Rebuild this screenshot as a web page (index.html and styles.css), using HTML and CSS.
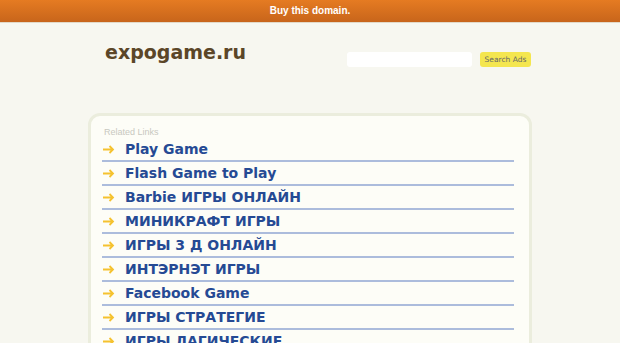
FILE: index.html
```html
<!DOCTYPE html>
<html lang="en">
<head>
    <meta charset="UTF-8">
    <title>expogame.ru</title>
    <link rel="stylesheet" href="styles.css">
</head>
<body>

    <div class="topbar">Buy this domain.</div>

    <div class="wrap">
        <div class="header">
            <div class="logo">expogame.ru</div>
            <form class="search">
                <input type="text" class="search-input">
                <button type="button" class="search-btn">Search Ads</button>
            </form>
        </div>

        <div class="panel">
            <div class="panel-title">Related Links</div>
            <ul class="links">
                <li><svg class="arrow" viewBox="0 0 12 9"><path d="M0 4.5h10M6.5 1l3.5 3.5-3.5 3.5"/></svg><a href="#">Play Game</a></li>
                <li><svg class="arrow" viewBox="0 0 12 9"><path d="M0 4.5h10M6.5 1l3.5 3.5-3.5 3.5"/></svg><a href="#">Flash Game to Play</a></li>
                <li><svg class="arrow" viewBox="0 0 12 9"><path d="M0 4.5h10M6.5 1l3.5 3.5-3.5 3.5"/></svg><a href="#">Barbie ИГРЫ ОНЛАЙН</a></li>
                <li><svg class="arrow" viewBox="0 0 12 9"><path d="M0 4.5h10M6.5 1l3.5 3.5-3.5 3.5"/></svg><a href="#">МИНИКРАФТ ИГРЫ</a></li>
                <li><svg class="arrow" viewBox="0 0 12 9"><path d="M0 4.5h10M6.5 1l3.5 3.5-3.5 3.5"/></svg><a href="#">ИГРЫ 3 Д ОНЛАЙН</a></li>
                <li><svg class="arrow" viewBox="0 0 12 9"><path d="M0 4.5h10M6.5 1l3.5 3.5-3.5 3.5"/></svg><a href="#">ИНТЭРНЭТ ИГРЫ</a></li>
                <li><svg class="arrow" viewBox="0 0 12 9"><path d="M0 4.5h10M6.5 1l3.5 3.5-3.5 3.5"/></svg><a href="#">Facebook Game</a></li>
                <li><svg class="arrow" viewBox="0 0 12 9"><path d="M0 4.5h10M6.5 1l3.5 3.5-3.5 3.5"/></svg><a href="#">ИГРЫ СТРАТЕГИЕ</a></li>
                <li><svg class="arrow" viewBox="0 0 12 9"><path d="M0 4.5h10M6.5 1l3.5 3.5-3.5 3.5"/></svg><a href="#">ИГРЫ ЛАГИЧЕСКИЕ</a></li>
            </ul>
        </div>
    </div>

</body>
</html>
```

FILE: styles.css
```css
body {
    margin: 0;
    background-color: #f7f7f0;
    font-family: "DejaVu Sans", sans-serif;
    overflow: hidden;
}

.topbar {
    height: 22px;
    line-height: 21px;
    text-align: center;
    color: #fff;
    font-family: "Liberation Sans", Arial, sans-serif;
    font-size: 10px;
    font-weight: bold;
    background: linear-gradient(#e57b22, #c8651b);
    border-bottom: 1px solid #e2d9c8;
}

.wrap {
    width: 444px;
    margin: 0 auto;
}

.header {
    display: flex;
    justify-content: space-between;
    align-items: flex-start;
    height: 90px;
}

.logo {
    margin: 18px 0 0 17px;
    font-size: 19px;
    font-weight: bold;
    color: #5b4628;
}

.search {
    display: flex;
    gap: 8px;
    margin: 29px 1px 0 0;
}

.search-input {
    width: 121px;
    height: 15px;
    padding: 0 2px;
    border: none;
    border-radius: 3px;
    background: #fff;
}

.search-btn {
    width: 51px;
    height: 15px;
    padding: 0;
    border: none;
    border-radius: 3px;
    background: #f4e64f;
    color: #666;
    font-family: "DejaVu Sans", sans-serif;
    font-size: 7.5px;
}

.panel {
    height: 300px;
    padding: 11px 15px 0 11px;
    background: #fdfdf7;
    border: 3px solid #ebeddd;
    border-radius: 12px;
}

.panel-title {
    margin-left: 2px;
    font-family: "Liberation Sans", Arial, sans-serif;
    font-size: 9px;
    color: #c8c8c0;
}

.links {
    list-style: none;
    margin: 1px 0 0 0;
    padding: 0;
}

.links li {
    display: flex;
    align-items: center;
    height: 22px;
    border-bottom: 2px solid #acbcdc;
}

.arrow {
    width: 12px;
    height: 9px;
    margin: 0 10px 0 1px;
    fill: none;
    stroke: #f5c22f;
    stroke-width: 1.8;
}

.links a {
    color: #254a94;
    font-size: 14px;
    font-weight: bold;
    text-decoration: none;
}
```
